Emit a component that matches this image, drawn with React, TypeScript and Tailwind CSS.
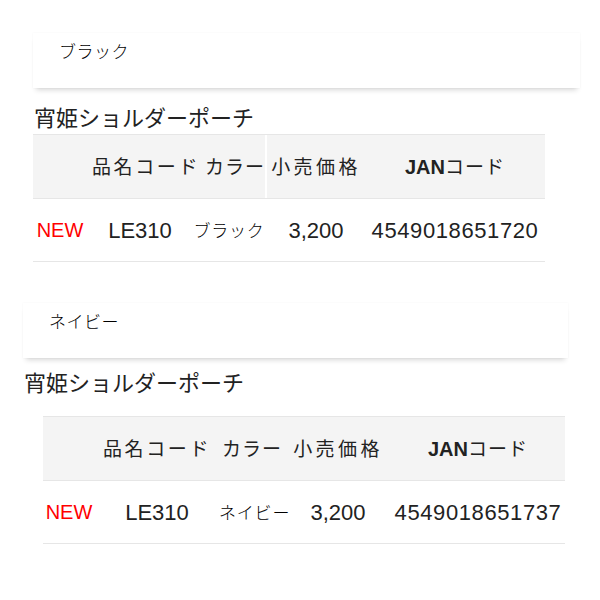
import React from 'react';

interface ProductRow {
  color: string;
  code: string;
  price: string;
  jan: string;
}

interface TableLayout {
  head: number[];
  body: number[];
  divider: boolean;
}

const JP = "font-['Noto_Sans_CJK_JP','Noto_Sans',sans-serif]";
const LATIN = "font-['Liberation_Sans','Noto_Sans_CJK_JP',sans-serif]";

function ColorCard({ label, className }: { label: string; className: string }) {
  return (
    <div className={`bg-white h-[55px] pl-[26px] pt-[6px] shadow-[0_5px_5px_-3px_rgba(0,0,0,0.16),0_0_2px_rgba(0,0,0,0.04)] ${className}`}>
      <span className={`${JP} text-[17px] leading-[24px] font-light text-black tracking-[0.5px]`}>{label}</span>
    </div>
  );
}

function SpecTable({ row, layout }: { row: ProductRow; layout: TableLayout }) {
  const [h0, h1, h2, h3, h4] = layout.head;
  const [b0, b1, b2, b3, b4] = layout.body;

  return (
    <div className="border-t border-b border-[#e6e6e6] text-[#222]">
      <div className="flex h-[64px] items-center bg-[#f4f4f4] border-b border-[#e6e6e6]">
        <div style={{ width: h0 }} />
        <div style={{ width: h1 }} className={`${JP} text-[19px] tracking-[2.6px] text-center`}>品名コード</div>
        <div style={{ width: h2 }} className={`${JP} text-[19px] tracking-[1px] text-center`}>カラー</div>
        {layout.divider && <div className="w-[2px] self-stretch bg-white" />}
        <div style={{ width: h3 }} className={`${JP} text-[19px] tracking-[3.4px] text-center`}>小売価格</div>
        <div style={{ width: h4 }} className="text-center text-[19px]">
          <span className={`${LATIN} font-bold text-[20px]`}>JAN</span>
          <span className={`${JP} tracking-[1px]`}>コード</span>
        </div>
      </div>
      <div className="flex h-[62px] items-center">
        <div style={{ width: b0 }} className={`${LATIN} text-[20px] text-[#f00] text-center`}>NEW</div>
        <div style={{ width: b1 }} className={`${LATIN} text-[22px] text-center`}>{row.code}</div>
        <div style={{ width: b2 }} className={`${JP} text-[17px] font-light text-black tracking-[0.8px] text-center whitespace-nowrap`}>{row.color}</div>
        {layout.divider && <div className="w-[2px] self-stretch" />}
        <div style={{ width: b3 }} className={`${LATIN} text-[22px] text-center`}>{row.price}</div>
        <div style={{ width: b4 }} className={`${LATIN} text-[22px] tracking-[0.6px] text-center`}>{row.jan}</div>
      </div>
    </div>
  );
}

export default function App() {
  const black: ProductRow = { color: 'ブラック', code: 'LE310', price: '3,200', jan: '4549018651720' };
  const navy: ProductRow = { color: 'ネイビー', code: 'LE310', price: '3,200', jan: '4549018651737' };

  return (
    <div className="w-[600px] h-[600px] bg-white pt-[33px] overflow-hidden">
      {/* black */}
      <ColorCard label="ブラック" className="ml-[33px] mr-[20px]" />
      <h2 className={`${JP} ml-[34px] mt-[13px] mb-[3px] text-[22px] leading-[30px] font-normal text-[#222]`}>宵姫ショルダーポーチ</h2>
      <div className="ml-[33px] w-[512px]">
        <SpecTable
          row={black}
          layout={{ head: [54, 118, 60, 98, 180], body: [54, 106, 72, 98, 180], divider: true }}
        />
      </div>

      {/* navy */}
      <ColorCard label="ネイビー" className="ml-[23px] mr-[32px] mt-[41px]" />
      <h2 className={`${JP} ml-[24px] mt-[8px] text-[22px] leading-[30px] font-normal text-[#222]`}>宵姫ショルダーポーチ</h2>
      <div className="ml-[43px] w-[522px] mt-[20px]">
        <SpecTable
          row={navy}
          layout={{ head: [52, 124, 66, 106, 174], body: [52, 124, 66, 106, 174], divider: false }}
        />
      </div>
    </div>
  );
}
